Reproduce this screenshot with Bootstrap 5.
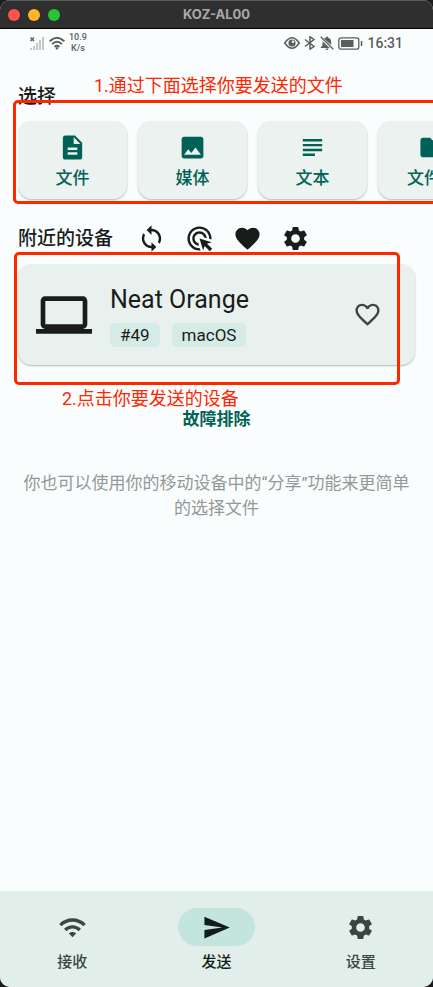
<!DOCTYPE html>
<html lang="zh-CN">
<head>
<meta charset="utf-8">
<meta name="viewport" content="width=device-width, initial-scale=1">
<title>KOZ-AL00</title>
<link href="https://cdn.jsdelivr.net/npm/bootstrap@5.3.0/dist/css/bootstrap.min.css" rel="stylesheet">
<style>
  body { background: #1c1c1e; font-family: Roboto, "Noto Sans CJK SC", sans-serif; color: #1a1c1b; }
  svg { fill: currentColor; flex: none; display: block; }
  .phone { background: #f9fdfd; border-radius: 10px; }
  .titlebar { height: 29px; background: #2f2f2f; border-top: 1px solid #5c5c5c; border-bottom: 1px solid #000; padding: 0 8px; }
  .lights { gap: 8px; flex: 1 0 0; }
  .light { width: 12px; height: 12px; }
  .light-red { background: #ff544d; }
  .light-amber { background: #ffb429; }
  .light-green { background: #28c438; }
  .window-name { font: 700 13px/16px Inter, sans-serif; color: #a9a9a9; padding-bottom: 2px; }
  .statusbar { height: 28px; padding: 0 30px; color: #5b5f5e; }
  .speed { font-size: 9px; line-height: 11px; margin-left: 4px; font-weight: 500; }
  .clock { font-size: 14px; line-height: 16px; font-weight: 500; }
  .content { padding: 28px 18px 0; }
  .heading { font-size: 19px; line-height: 24px; font-weight: 500; }
  .sources { margin: 12px -18px 0 0; gap: 11px; overflow-x: auto; scrollbar-width: none; padding-bottom: 3px; }
  .tile { background: #ebf2ef; box-shadow: 0 1px 2px rgba(0,0,0,.28); border-radius: 14px; }
  .source { flex: 0 0 109px; height: 78px; color: #006156; font-size: 17px; line-height: 24px; font-weight: 500; gap: 4px; }
  .source svg { margin-top: 2px; }
  .i29 { width: 29px; height: 29px; }
  .nearby { margin-top: 22px; }
  .nearby .btn { color: #1a1c1b; }
  .tools { gap: 19px; margin-left: 24px; }
  .device { margin-top: 11px; padding: 18px 33px 18px 18px; gap: 18px; background: #e9f1ee; }
  .device-name { font-size: 25px; line-height: 30px; margin: 3px 0 8px; }
  .chip { background: #d5ebe5; border-radius: 5px; font-size: 17px; line-height: 24px; padding: 0 10px; }
  .chips { gap: 12px; }
  .trouble { margin-top: 42px; color: #006156; font-size: 17px; line-height: 24px; font-weight: 700; }
  .hint { margin-top: 40px; font-size: 17px; line-height: 25px; color: #949897; }
  .tabs { background: #e1eeea; height: 96px; padding-top: 17px; border-radius: 0 0 10px 10px; }
  .tab { color: #3c4543; font-size: 15px; line-height: 20px; font-weight: 500; gap: 6px; }
  .tab.active { color: #101d1a; }
  .pill { width: 77px; height: 38px; }
  .active .pill { background: #c4e4de; }
  /* Red tutorial marks laid over the screen */
  .frame-mark { position: absolute; border: 3px solid #ff2600; border-radius: 5px; pointer-events: none; z-index: 2; }
  .frame-sources { top: 15px; left: -5px; right: -30px; height: 104px; }
  .frame-device { top: 28px; left: -4px; right: 15px; height: 133px; }
  .note { position: absolute; font-size: 18px; line-height: 24px; color: #ff2600; white-space: nowrap; z-index: 2; }
  .note-sources { top: -11px; left: 76px; }
  .note-device { top: 163px; left: 44px; }
</style>
<script src="https://cdn.jsdelivr.net/npm/bootstrap@5.3.0/dist/js/bootstrap.bundle.min.js"></script>
</head>
<body>
<svg class="d-none" aria-hidden="true">
  <symbol id="gear" viewBox="0 0 24 24"><path d="M19.14 12.94c.04-.3.06-.61.06-.94 0-.32-.02-.64-.07-.94l2.03-1.58c.18-.14.23-.41.12-.61l-1.92-3.32c-.12-.22-.37-.29-.59-.22l-2.39.96c-.5-.38-1.03-.7-1.62-.94l-.36-2.54c-.04-.24-.24-.41-.48-.41h-3.84c-.24 0-.43.17-.47.41l-.36 2.54c-.59.24-1.13.57-1.62.94l-2.39-.96c-.22-.08-.47 0-.59.22L2.74 8.87c-.12.21-.08.47.12.61l2.03 1.58c-.05.3-.09.63-.09.94s.02.64.07.94l-2.03 1.58c-.18.14-.23.41-.12.61l1.92 3.32c.12.22.37.29.59.22l2.39-.96c.5.38 1.03.7 1.62.94l.36 2.54c.05.24.24.41.48.41h3.84c.24 0 .44-.17.47-.41l.36-2.54c.59-.24 1.13-.56 1.62-.94l2.39.96c.22.08.47 0 .59-.22l1.92-3.32c.12-.22.07-.47-.12-.61l-2.01-1.58zM12 15.6c-1.98 0-3.6-1.62-3.6-3.6s1.62-3.6 3.6-3.6 3.6 1.62 3.6 3.6-1.62 3.6-3.6 3.6z"/></symbol>
</svg>
<div class="phone d-flex flex-column min-vh-100 overflow-hidden">
  <header class="titlebar d-flex align-items-center">
    <div class="lights d-flex">
      <span class="light light-red rounded-circle"></span>
      <span class="light light-amber rounded-circle"></span>
      <span class="light light-green rounded-circle"></span>
    </div>
    <div class="window-name">KOZ-AL00</div>
    <div class="lights"></div>
  </header>

  <div class="statusbar d-flex align-items-center">
    <svg width="15" height="15" viewBox="0 0 15 15"><path d="M.5 1.5l3.500 3.500M4 1.500L.5 5" stroke="currentColor" stroke-width="1.500"/><path fill="#c3c7c6" d="M0 12h2v2H0zM3 10h2v4H3zM6 7h2v7H6zM9 4h2v10H9zM12 1h2v13h-2z"/></svg>
    <svg class="ms-1" width="16" height="15" viewBox="0 0 16 15" stroke="currentColor" stroke-width="2"><g fill="none"><path d="M.7 5.200Q8-1.600 15.300 5.200M3.100 8Q8 3.600 12.900 8M5.500 10.700Q8 8.700 10.500 10.700"/></g><path stroke="none" d="M6.300 12l1.700-1 1.700 1L8 14z"/></svg>
    <div class="speed text-center">10.9<br>K/s</div>
    <div class="d-flex align-items-center ms-auto">
      <svg width="16" height="14" viewBox="0 0 16 14"><path d="M.8 7Q8-3.400 15.200 7 8 17.400.8 7z" fill="none" stroke="currentColor" stroke-width="1.500"/><circle cx="8" cy="7" r="3.600"/><circle cx="9" cy="5.800" r="1.200" fill="#f9fdfd"/></svg>
      <svg class="ms-1" width="12" height="14" viewBox="0 0 12 14"><path d="M1 3.500l9 7L6 13.200V.8l4 2.700-9 7" fill="none" stroke="currentColor" stroke-width="1.500"/></svg>
      <svg class="ms-1" width="14" height="14" viewBox="0 0 14 14"><path d="M2.500 5.200L9.800 12H.8v-1l1.700-1.500zM4 2.800c.6-.6 1.300-1 2-1.200a1 1 0 0 1 2 0c2 .6 3.200 2.200 3.200 4.200v3.300zM5.500 12.500h3a1.500 1.500 0 0 1-3 0z"/><path d="M.7.7l12.600 12.600" stroke="currentColor" stroke-width="1.300"/></svg>
      <svg class="mx-1" width="25" height="13" viewBox="0 0 25 13"><rect x=".8" y=".8" width="20" height="11.400" rx="2.200" fill="none" stroke="currentColor" stroke-width="1.300"/><path d="M3 3h12.500v7H3zM22.800 4h1.500v5h-1.500z"/></svg>
      <span class="clock">16:31</span>
    </div>
  </div>

  <main class="content flex-grow-1">
    <section class="position-relative">
      <h2 class="heading mb-0">选择</h2>
      <div class="sources d-flex">
        <button class="source tile btn border-0 p-0 d-flex flex-column align-items-center justify-content-center">
          <svg class="i29" viewBox="0 0 24 24"><path d="M14 2H6c-1.100 0-1.990.9-1.990 2L4 20c0 1.100.89 2 1.990 2H18c1.100 0 2-.9 2-2V8l-6-6zm2 16H8v-2h8v2zm0-4H8v-2h8v2zm-3-5V3.500L18.500 9H13z"/></svg>文件</button>
        <button class="source tile btn border-0 p-0 d-flex flex-column align-items-center justify-content-center">
          <svg class="i29" viewBox="0 0 24 24"><path d="M21 19V5c0-1.100-.9-2-2-2H5c-1.100 0-2 .9-2 2v14c0 1.100.9 2 2 2h14c1.100 0 2-.9 2-2zM8.500 13.500l2.500 3.010L14.500 12l4.500 6H5l3.500-4.500z"/></svg>媒体</button>
        <button class="source tile btn border-0 p-0 d-flex flex-column align-items-center justify-content-center">
          <svg class="i29" viewBox="0 0 24 24"><path d="M14 17H4v2h10v-2zm6-8H4v2h16V9zM4 15h16v-2H4v2zM4 5v2h16V5H4z"/></svg>文本</button>
        <button class="source tile btn border-0 p-0 d-flex flex-column align-items-center justify-content-center">
          <svg class="i29" viewBox="0 0 24 24"><path d="M10 4H4c-1.100 0-1.990.9-1.990 2L2 18c0 1.100.9 2 2 2h16c1.100 0 2-.9 2-2V8c0-1.100-.9-2-2-2h-8l-2-2z"/></svg>文件夹</button>
      </div>
      <div class="frame-mark frame-sources"></div>
      <div class="note note-sources">1.通过下面选择你要发送的文件</div>
    </section>

    <section class="nearby position-relative">
      <div class="d-flex align-items-center">
        <h2 class="heading mb-0">附近的设备</h2>
        <div class="tools d-flex">
          <button class="btn border-0 p-0" aria-label="刷新"><svg class="i29" viewBox="0 0 24 24"><path d="M12 4V1L8 5l4 4V6c3.310 0 6 2.690 6 6 0 1.010-.25 1.970-.7 2.800l1.460 1.460C19.540 15.030 20 13.570 20 12c0-4.420-3.580-8-8-8zm0 14c-3.310 0-6-2.690-6-6 0-1.010.25-1.970.7-2.800L5.240 7.740C4.460 8.970 4 10.430 4 12c0 4.420 3.580 8 8 8v3l4-4-4-4v3z"/></svg></button>
          <button class="btn border-0 p-0" aria-label="手动发送"><svg class="i29" viewBox="0 0 24 24"><path d="M11.710,17.990C8.530,17.840,6,15.220,6,12c0-3.310,2.690-6,6-6c3.220,0,5.840,2.530,5.990,5.710l-2.100-0.630C15.480,9.310,13.890,8,12,8c-2.210,0-4,1.790-4,4c0,1.890,1.310,3.480,3.080,3.890L11.710,17.990z M22,12c0,0.300-0.010,0.600-0.040,0.900l-1.970-0.590C20,12.210,20,12.100,20,12c0-4.420-3.580-8-8-8s-8,3.580-8,8s3.580,8,8,8c0.100,0,0.210,0,0.310-0.010l0.590,1.970C12.600,21.990,12.300,22,12,22C6.480,22,2,17.520,2,12C2,6.480,6.480,2,12,2S22,6.480,22,12z M18.230,16.260L22,15l-10-3l3,10l1.260-3.770l4.270,4.270l1.980-1.980L18.230,16.260z"/></svg></button>
          <button class="btn border-0 p-0" aria-label="收藏"><svg class="i29" viewBox="0 0 24 24"><path d="M12 21.350l-1.450-1.320C5.400 15.360 2 12.280 2 8.500 2 5.420 4.420 3 7.500 3c1.740 0 3.410.81 4.500 2.090C13.090 3.810 14.760 3 16.500 3 19.580 3 22 5.420 22 8.500c0 3.780-3.400 6.860-8.550 11.540L12 21.350z"/></svg></button>
          <button class="btn border-0 p-0" aria-label="发送设置"><svg class="i29"><use href="#gear"/></svg></button>
        </div>
      </div>
      <div class="device tile d-flex align-items-center">
        <svg width="56" height="56" viewBox="0 0 24 24"><path d="M20 18c1.100 0 1.990-.9 1.990-2L22 6c0-1.100-.9-2-2-2H4c-1.100 0-2 .9-2 2v10c0 1.100.9 2 2 2H0v2h24v-2h-4zM4 6h16v10H4V6z"/></svg>
        <div class="flex-grow-1">
          <div class="device-name">Neat Orange</div>
          <div class="chips d-flex"><span class="chip">#49</span><span class="chip">macOS</span></div>
        </div>
        <button class="btn border-0 p-0" aria-label="添加收藏"><svg class="i29" viewBox="0 0 24 24" color="#3f4745"><path d="M16.500 3c-1.740 0-3.410.81-4.500 2.090C10.910 3.810 9.240 3 7.500 3 4.420 3 2 5.420 2 8.500c0 3.780 3.400 6.860 8.550 11.540L12 21.350l1.450-1.320C18.600 15.360 22 12.280 22 8.500 22 5.420 19.580 3 16.500 3zm-4.400 15.550l-.1.1-.1-.1C7.140 14.240 4 11.390 4 8.500 4 6.500 5.500 5 7.500 5c1.540 0 3.040.99 3.570 2.360h1.870C13.460 5.990 14.960 5 16.500 5c2 0 3.500 1.500 3.500 3.500 0 2.890-3.140 5.740-7.900 10.050z"/></svg></button>
      </div>
      <div class="frame-mark frame-device"></div>
      <div class="note note-device">2.点击你要发送的设备</div>
    </section>

    <button class="trouble btn border-0 p-0 d-block mx-auto">故障排除</button>
    <p class="hint text-center mb-0">你也可以使用你的移动设备中的“分享”功能来更简单的选择文件</p>
  </main>

  <nav class="tabs d-flex">
    <a href="#receive" class="tab col text-decoration-none d-flex flex-column align-items-center">
      <span class="pill rounded-pill d-flex align-items-center justify-content-center"><svg class="i29" viewBox="0 0 24 24"><path d="M1 9l2 2c4.970-4.970 13.030-4.970 18 0l2-2C16.930 2.930 7.080 2.930 1 9zm8 8l3 3 3-3c-1.650-1.660-4.340-1.660-6 0zm-4-4l2 2c2.760-2.760 7.240-2.760 10 0l2-2C15.140 9.140 8.870 9.140 5 13z"/></svg></span>接收</a>
    <a href="#send" class="tab active col text-decoration-none d-flex flex-column align-items-center" aria-current="page">
      <span class="pill rounded-pill d-flex align-items-center justify-content-center"><svg class="i29" viewBox="0 0 24 24"><path d="M2.010 21L23 12 2.010 3 2 10l15 2-15 2z"/></svg></span>发送</a>
    <a href="#settings" class="tab col text-decoration-none d-flex flex-column align-items-center">
      <span class="pill rounded-pill d-flex align-items-center justify-content-center"><svg class="i29"><use href="#gear"/></svg></span>设置</a>
  </nav>
</div>
</body>
</html>
